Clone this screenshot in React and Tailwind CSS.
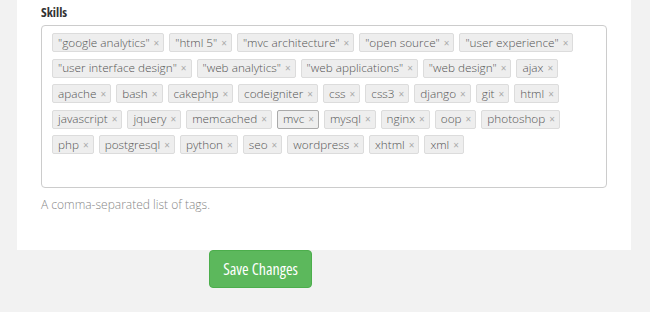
const tags = [
  '"google analytics"', '"html 5"', '"mvc architecture"', '"open source"', '"user experience"',
  '"user interface design"', '"web analytics"', '"web applications"', '"web design"', 'ajax',
  'apache', 'bash', 'cakephp', 'codeigniter', 'css', 'css3', 'django', 'git', 'html',
  'javascript', 'jquery', 'memcached', 'mvc', 'mysql', 'nginx', 'oop', 'photoshop',
  'php', 'postgresql', 'python', 'seo', 'wordpress', 'xhtml', 'xml',
];

export default function App() {
  return (
    <div className="w-[650px] h-[312px] bg-[#f2f2f2] overflow-hidden" style={{ fontFamily: '"Open Sans", sans-serif' }}>
      <div className="mx-[17px] w-[614px] h-[250px] bg-white px-6 pt-[3px]">
        <div className="text-[13px] font-bold text-[#333] leading-[18px] [font-stretch:85%]">Skills</div>
        <div className="mt-[4px] h-[163px] border border-[#ccc] rounded-[4px] pl-[10px] pr-2 pt-[7px]">
          <div className="flex flex-wrap gap-x-[5px] gap-y-[6.5px]">
            {tags.map((t) => (
              <span
                key={t}
                className={`inline-flex items-center h-[19px] pl-[5px] pr-[4px] rounded-[2px] bg-[#eeeeee] border text-[11.75px] font-light leading-none text-[#555] [font-stretch:88%] ${t === 'mvc' ? 'border-[#aaa]' : 'border-[#dcdcdc]'}`}
              >
                {t}
                <span className="ml-[4px] text-[10px] text-[#aaa] font-normal">×</span>
              </span>
            ))}
          </div>
        </div>
        <div className="mt-[9px] text-[12px] font-light text-[#888] leading-[16px]">A comma-separated list of tags.</div>
      </div>
      <div className="flex pl-[209px]">
        <button className="w-[103px] h-[38px] bg-[#5cb85c] border border-[#4cae4c] rounded-[4px] text-white text-[16px] font-medium [font-stretch:82%]">
          Save Changes
        </button>
      </div>
    </div>
  );
}
